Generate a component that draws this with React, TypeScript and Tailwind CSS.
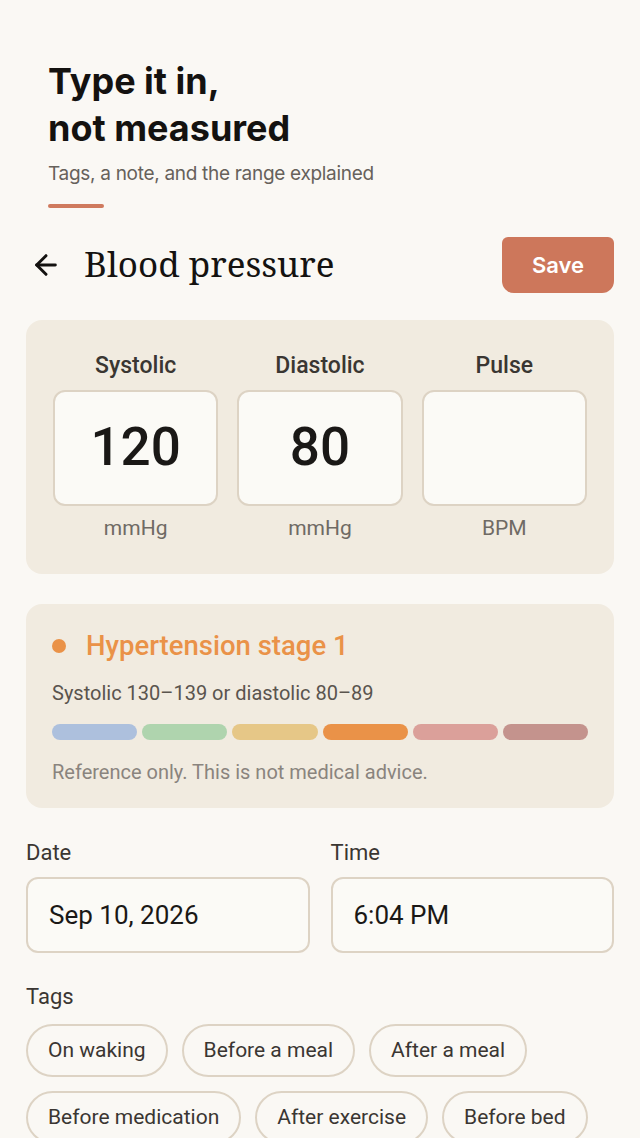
import { ArrowLeft } from "lucide-react";

const inter = { fontFamily: "Inter, 'Noto Sans', sans-serif" };

const segments = [
  "bg-[#adc0dd]",
  "bg-[#afd4ae]",
  "bg-[#e6c787]",
  "bg-[#ea9248]",
  "bg-[#dba09a]",
  "bg-[#c4938d]",
];

const tags = [
  "On waking",
  "Before a meal",
  "After a meal",
  "Before medication",
  "After exercise",
  "Before bed",
];

function Reading({ label, value, unit }: { label: string; value: string; unit: string }) {
  return (
    <div className="flex flex-col items-center">
      <div className="text-[23px] font-medium leading-[23px] text-[#3a3632]">{label}</div>
      <div className="mt-[13px] flex h-[116px] w-full items-center justify-center rounded-[12px] border-2 border-[#ddd3c4] bg-[#fbfaf6] text-[53px] font-medium text-[#1a1816]">
        {value}
      </div>
      <div className="mt-[12px] text-[21px] leading-[21px] text-[#6f6a64]">{unit}</div>
    </div>
  );
}

export default function App() {
  return (
    <div
      className="min-h-[1138px] w-full overflow-hidden bg-[#faf8f4] text-[#1a1816]"
      style={{ fontFamily: "Roboto, 'Noto Sans', sans-serif" }}
    >
      <div className="px-[48px] pt-[58px]" style={inter}>
        <h1 className="text-[36px] font-bold leading-[47px] text-[#141210]">
          Type it in,
          <br />
          not measured
        </h1>
        <p className="mt-[10px] text-[19px] leading-[23px] tracking-[-0.3px] text-[#66615b]">
          Tags, a note, and the range explained
        </p>
        <div className="mt-[19px] h-[4px] w-[56px] rounded-full bg-[#cf7a5e]" />
      </div>

      <div className="mt-[29px] flex h-[56px] items-center justify-between pl-[30px] pr-[26px]">
        <div className="flex items-center gap-[22px]">
          <ArrowLeft size={32} strokeWidth={2.2} className="text-[#141210]" />
          <span
            className="-mt-[3px] text-[35px] leading-[40px] text-[#141210]"
            style={{ fontFamily: "'Noto Serif', 'DejaVu Serif', 'Liberation Serif', serif" }}
          >
            Blood pressure
          </span>
        </div>
        <button
          className="h-[56px] w-[112px] rounded-t-[6px] rounded-b-[12px] bg-[#cd775b] text-[22px] font-semibold text-white"
          style={inter}
        >
          Save
        </button>
      </div>

      <div className="mx-[26px] mt-[27px] rounded-[16px] bg-[#f1ebe0] px-[27px] pb-[35px] pt-[34px]">
        <div className="grid grid-cols-3 gap-[19px]">
          <Reading label="Systolic" value="120" unit="mmHg" />
          <Reading label="Diastolic" value="80" unit="mmHg" />
          <Reading label="Pulse" value="" unit="BPM" />
        </div>
      </div>

      <div className="mx-[26px] mt-[30px] rounded-[16px] bg-[#f1ebe0] px-[26px] pb-[26px] pt-[28px]">
        <div className="flex h-[28px] items-center gap-[20px]">
          <span className="h-[14px] w-[14px] rounded-full bg-[#ea9248]" />
          <span className="text-[27.5px] font-medium leading-[28px] text-[#ea9248]">Hypertension stage 1</span>
        </div>
        <p className="mt-[23px] text-[20px] leading-[20px] text-[#5a544e]">Systolic 130–139 or diastolic 80–89</p>
        <div className="mt-[21px] flex gap-[5px]">
          {segments.map((c) => (
            <div key={c} className={`h-[16px] flex-1 rounded-full ${c}`} />
          ))}
        </div>
        <p className="mt-[22px] text-[20px] leading-[20px] text-[#8a847e]">
          Reference only. This is not medical advice.
        </p>
      </div>

      <div className="mx-[26px] mt-[34px] grid grid-cols-2 gap-[21px]">
        <div>
          <div className="text-[22px] leading-[22px] text-[#3a3632]">Date</div>
          <div className="mt-[13px] flex h-[76px] items-center rounded-[12px] border-2 border-[#ddd3c4] bg-[#fbfaf6] px-[21px] text-[26px] text-[#1a1816]">
            Sep 10, 2026
          </div>
        </div>
        <div>
          <div className="text-[22px] leading-[22px] text-[#3a3632]">Time</div>
          <div className="mt-[13px] flex h-[76px] items-center rounded-[12px] border-2 border-[#ddd3c4] bg-[#fbfaf6] px-[21px] text-[26px] text-[#1a1816]">
            6:04 PM
          </div>
        </div>
      </div>

      <div className="mx-[26px] mt-[33px]">
        <div className="text-[22px] leading-[22px] text-[#3a3632]">Tags</div>
        <div className="mt-[16px] flex flex-wrap gap-x-[14px] gap-y-[14px]">
          {tags.map((t) => (
            <div
              key={t}
              className="flex h-[53px] items-center rounded-full border-2 border-[#ddd3c4] px-[20px] text-[21px] text-[#3a3632]"
            >
              {t}
            </div>
          ))}
        </div>
      </div>
    </div>
  );
}
